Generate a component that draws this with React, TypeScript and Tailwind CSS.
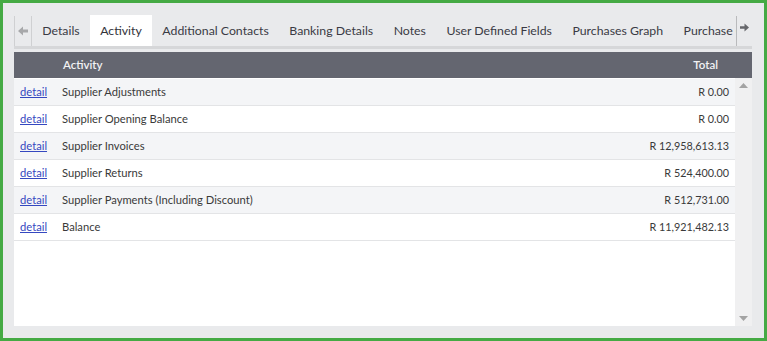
import React from "react";

const TABS = [
  "Details",
  "Activity",
  "Additional Contacts",
  "Banking Details",
  "Notes",
  "User Defined Fields",
  "Purchases Graph",
  "Purchase Orders",
];

const ROWS = [
  { name: "Supplier Adjustments", total: "R 0.00" },
  { name: "Supplier Opening Balance", total: "R 0.00" },
  { name: "Supplier Invoices", total: "R 12,958,613.13" },
  { name: "Supplier Returns", total: "R 524,400.00" },
  { name: "Supplier Payments (Including Discount)", total: "R 512,731.00" },
  { name: "Balance", total: "R 11,921,482.13" },
];

export default function App() {
  return (
    <div
      className="w-[767px] h-[341px] border-[3px] border-[#45aa44] bg-[#e9eaec] pl-[11px] pr-[12px] pt-[12px] flex flex-col text-[#333]"
      style={{ fontFamily: "Lato, 'Open Sans', sans-serif" }}
    >
      {/* tab strip */}
      <div className="flex h-[34px] border-b-[3px] border-[#d6d7d9]">
        <button className="w-[18px] mt-[1px] h-[30px] border-l border-r border-[#cfd0d2] flex items-center justify-center text-[#a7a8aa]">
          <svg width="10" height="10" viewBox="0 0 10 10">
            <path d="M0 5 L5 0.5 L5 3.5 L10 3.5 L10 6.5 L5 6.5 L5 9.5 Z" fill="currentColor" />
          </svg>
        </button>
        <div className="flex-1 flex overflow-hidden">
          {TABS.map((t) => (
            <div
              key={t}
              className={
                t === "Activity"
                  ? "px-[10.25px] h-[34px] -mb-[3px] bg-white border-b-[3px] border-[#2f5fc9] text-[12.3px] leading-[31px] whitespace-nowrap text-[#33333b]"
                  : "px-[10.25px] h-[31px] text-[12.3px] leading-[31px] whitespace-nowrap text-[#3a3a44]"
              }
            >
              {t}
            </div>
          ))}
        </div>
        <button className="w-[16px] mt-[1px] h-[30px] border-l border-[#b9babc] bg-[#e9eaec] flex items-start pt-[7px] justify-center text-[#66676b]">
          <svg width="9" height="9" viewBox="0 0 10 10">
            <path d="M10 5 L5 0.5 L5 3.5 L0 3.5 L0 6.5 L5 6.5 L5 9.5 Z" fill="currentColor" />
          </svg>
        </button>
      </div>

      {/* table */}
      <div className="mt-[3px] flex flex-col">
        <div className="h-[26px] bg-[#646670] text-[#f2f2f4] text-[11.5px] font-semibold flex items-center">
          <div className="w-[49px]" />
          <div className="flex-1">Activity</div>
          <div className="pr-[34px]">Total</div>
        </div>
        <div className="flex h-[248px]">
          <div className="flex-1 bg-white pt-[1px]">
            {ROWS.map((r, i) => (
              <div
                key={r.name}
                className={
                  "h-[27px] flex items-center text-[11.2px] border-b border-[#e3e4e6] " +
                  (i % 2 === 0 ? "bg-[#f4f5f7]" : "bg-white")
                }
              >
                <a href="#" className="w-[48px] pl-[6px] text-[#3548c0] underline">
                  detail
                </a>
                <div className="flex-1 text-[#3a3a3a]">{r.name}</div>
                <div className="pr-[6px] text-[#3a3a3a] text-[10.8px]">{r.total}</div>
              </div>
            ))}
          </div>
          <div className="w-[17px] bg-[#f0f0f1] flex flex-col justify-between items-center py-[5px]">
            <svg width="9" height="5" viewBox="0 0 9 5">
              <path d="M0 5 L4.5 0 L9 5 Z" fill="#a3a3a3" />
            </svg>
            <svg width="9" height="5" viewBox="0 0 9 5">
              <path d="M0 0 L4.5 5 L9 0 Z" fill="#a3a3a3" />
            </svg>
          </div>
        </div>
      </div>
    </div>
  );
}
